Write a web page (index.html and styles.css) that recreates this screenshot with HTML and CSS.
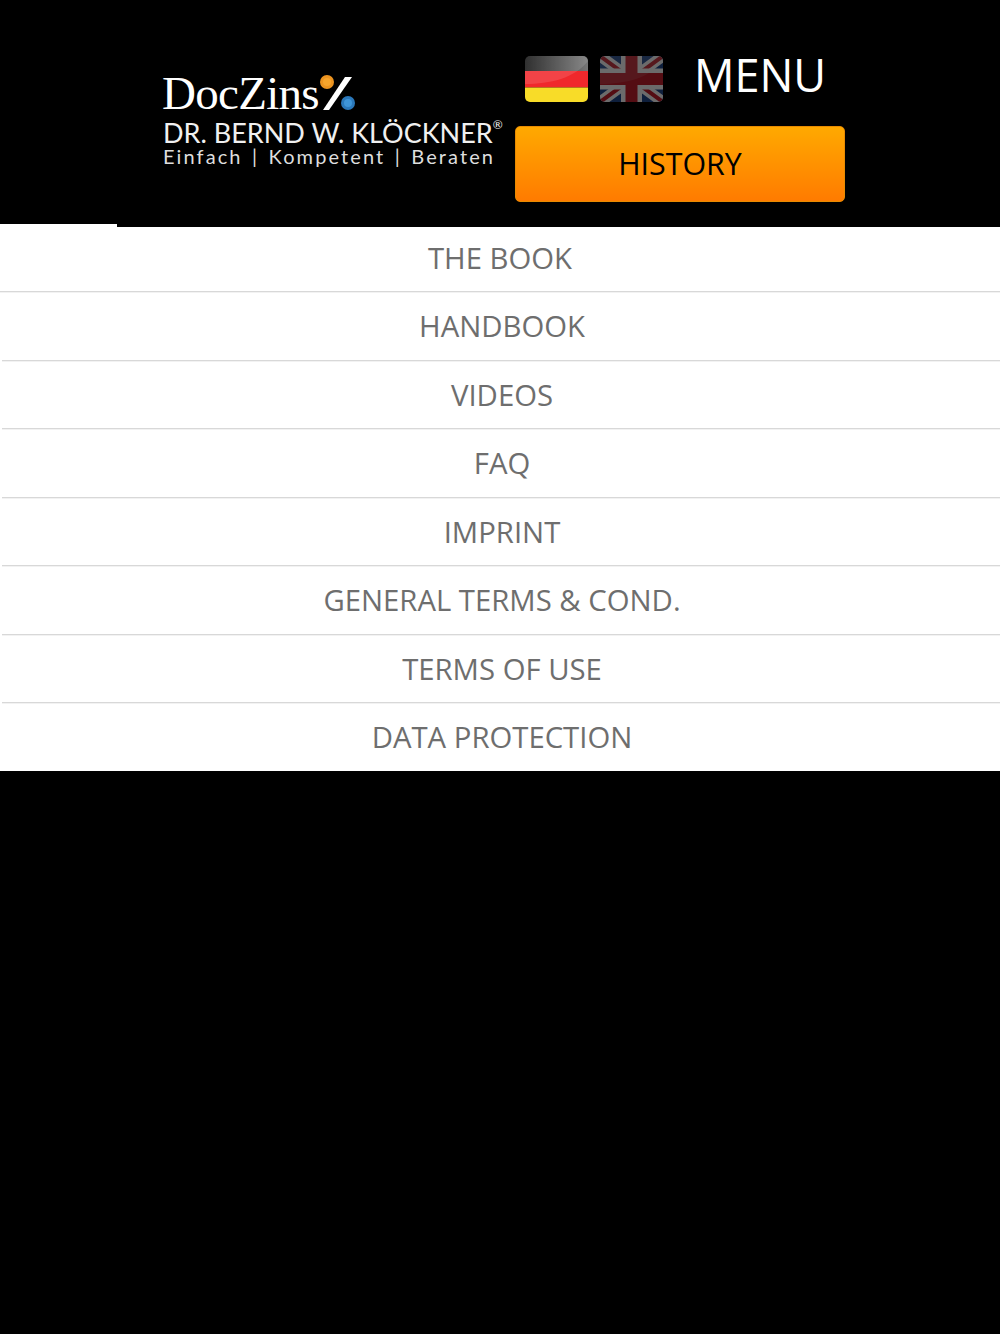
FILE: index.html
```html
<!DOCTYPE html>
<html lang="en">
<head>
<meta charset="utf-8">
<title>DocZins Menu</title>
<link rel="stylesheet" href="styles.css">
</head>
<body>
<header class="header">
  <div class="logo">
    <div class="logo-mark">
      <span class="logo-name">DocZins</span>
      <svg class="logo-percent" width="40" height="40" viewBox="0 0 40 40" aria-hidden="true">
        <path d="M5 38 L27 5 L34 5 L11 38 Z" fill="#fff"/>
        <circle cx="9" cy="10" r="7" fill="#ec9420"/>
        <circle cx="9" cy="10" r="4" fill="#f7a52c"/>
        <circle cx="30" cy="31" r="7" fill="#2b78ba"/>
        <circle cx="30" cy="31" r="4" fill="#3e95d8"/>
      </svg>
    </div>
    <div class="logo-author">DR. BERND W. KLÖCKNER<sup class="logo-reg">®</sup></div>
    <div class="logo-tag">Einfach | Kompetent | Beraten</div>
  </div>
  <div class="actions">
    <div class="top-row">
      <svg class="flag" width="63" height="46" viewBox="0 0 63 46" aria-label="Deutsch" role="img">
        <defs>
          <clipPath id="flag-de"><rect width="63" height="46" rx="5"/></clipPath>
          <linearGradient id="de-black" x1="0" y1="0" x2="1" y2="0">
            <stop offset="0" stop-color="#111"/><stop offset="1" stop-color="#777"/>
          </linearGradient>
        </defs>
        <g clip-path="url(#flag-de)">
          <rect width="63" height="16" fill="url(#de-black)"/>
          <rect y="15" width="63" height="16.500" fill="#f0282c"/>
          <rect y="31.500" width="63" height="14.500" fill="#f8dc28"/>
          <path d="M0 0 H63 V5 C50 22 25 28 0 28 Z" fill="#fff" opacity=".13"/>
        </g>
      </svg>
      <svg class="flag flag-dim" width="63" height="46" viewBox="0 0 63 46" aria-label="English" role="img">
        <defs>
          <clipPath id="flag-uk"><rect width="63" height="46" rx="5"/></clipPath>
        </defs>
        <g clip-path="url(#flag-uk)">
          <rect width="63" height="46" fill="#234a90"/>
          <path d="M0 0 L63 46 M63 0 L0 46" stroke="#fff" stroke-width="11"/>
          <path d="M0 0 L63 46 M63 0 L0 46" stroke="#c8202e" stroke-width="4"/>
          <path d="M31.500 0 V46 M0 23 H63" stroke="#fff" stroke-width="21"/>
          <path d="M31.500 0 V46 M0 23 H63" stroke="#c8202e" stroke-width="12"/>
          <path d="M0 0 H63 V5 C50 22 25 28 0 28 Z" fill="#fff" opacity=".12"/>
        </g>
      </svg>
      <span class="menu-label">MENU</span>
    </div>
    <a class="history" href="#">HISTORY</a>
  </div>
  <div class="header-tab"></div>
</header>
<nav class="nav">
  <a class="nav-item nav-first" href="#">THE BOOK</a>
  <a class="nav-item" href="#">HANDBOOK</a>
  <a class="nav-item" href="#">VIDEOS</a>
  <a class="nav-item" href="#">FAQ</a>
  <a class="nav-item" href="#">IMPRINT</a>
  <a class="nav-item" href="#">GENERAL TERMS &amp; COND.</a>
  <a class="nav-item" href="#">TERMS OF USE</a>
  <a class="nav-item nav-last" href="#">DATA PROTECTION</a>
</nav>
</body>
</html>
```
FILE: styles.css
```css
html, body {
  margin: 0;
  padding: 0;
  min-height: 1334px;
  background: #000;
  font-family: "Open Sans", "Liberation Sans", sans-serif;
}

.header {
  position: relative;
  display: flex;
  height: 227px;
  box-sizing: border-box;
  padding-left: 162px;
}

.header-tab {
  position: absolute;
  left: 0;
  bottom: 0;
  width: 117px;
  height: 3px;
  background: #fff;
}

.logo {
  width: 353px;
  padding-top: 70px;
  color: #fff;
}

.logo-mark {
  display: flex;
  align-items: flex-start;
  height: 46px;
}

.logo-name {
  width: 156px;
  font-family: "Liberation Serif", serif;
  font-size: 47px;
  line-height: 46px;
  letter-spacing: -0.7px;
}

.logo-percent {
  flex: none;
  margin-top: 2px;
}

.logo-author {
  font-family: "Lato", sans-serif;
  font-size: 27px;
  line-height: 28px;
  margin-top: 3px;
  padding-left: 1px;
  white-space: nowrap;
  color: #f0f0f0;
}

.logo-reg {
  font-size: 12px;
  line-height: 0;
  vertical-align: 14px;
}

.logo-tag {
  font-family: "Lato", sans-serif;
  font-size: 20px;
  line-height: 19px;
  letter-spacing: 2.1px;
  word-spacing: 2.2px;
  padding-left: 1px;
  white-space: nowrap;
  color: #dedede;
}

.actions {
  width: 330px;
  padding-top: 51px;
}

.top-row {
  display: flex;
  align-items: flex-start;
  gap: 12px;
  padding: 5px 0 0 10px;
  height: 70px;
}

.flag {
  display: block;
  flex: none;
}

.flag-dim {
  opacity: 0.42;
}

.menu-label {
  margin-left: 19px;
  margin-top: -11px;
  color: #fff;
  font-size: 45px;
  line-height: 60px;
  font-weight: 500;
}

.history {
  display: block;
  height: 76px;
  box-sizing: border-box;
  border: 1px solid #e88a00;
  border-radius: 5px;
  background: linear-gradient(#ffa900, #ff7b00);
  color: #000;
  font-size: 30.400px;
  font-weight: 500;
  line-height: 73px;
  text-align: center;
  text-decoration: none;
}

.nav {
  display: flex;
  flex-direction: column;
  background: #fff;
}

.nav-item {
  display: block;
  box-sizing: border-box;
  height: 68.500px;
  margin-left: 2px;
  padding: 1px 0 0 2px;
  border-bottom: 1px solid #d8d8d8;
  box-shadow: 0 1px 0 #f2f2f2;
  color: #6e6e6e;
  font-size: 29.300px;
  line-height: 67px;
  text-align: center;
  text-decoration: none;
}

.nav-first {
  height: 65px;
  margin-left: 0;
  padding: 0;
  line-height: 62px;
}

.nav-last {
  height: 68px;
  border-bottom: 0;
  box-shadow: none;
}
```
